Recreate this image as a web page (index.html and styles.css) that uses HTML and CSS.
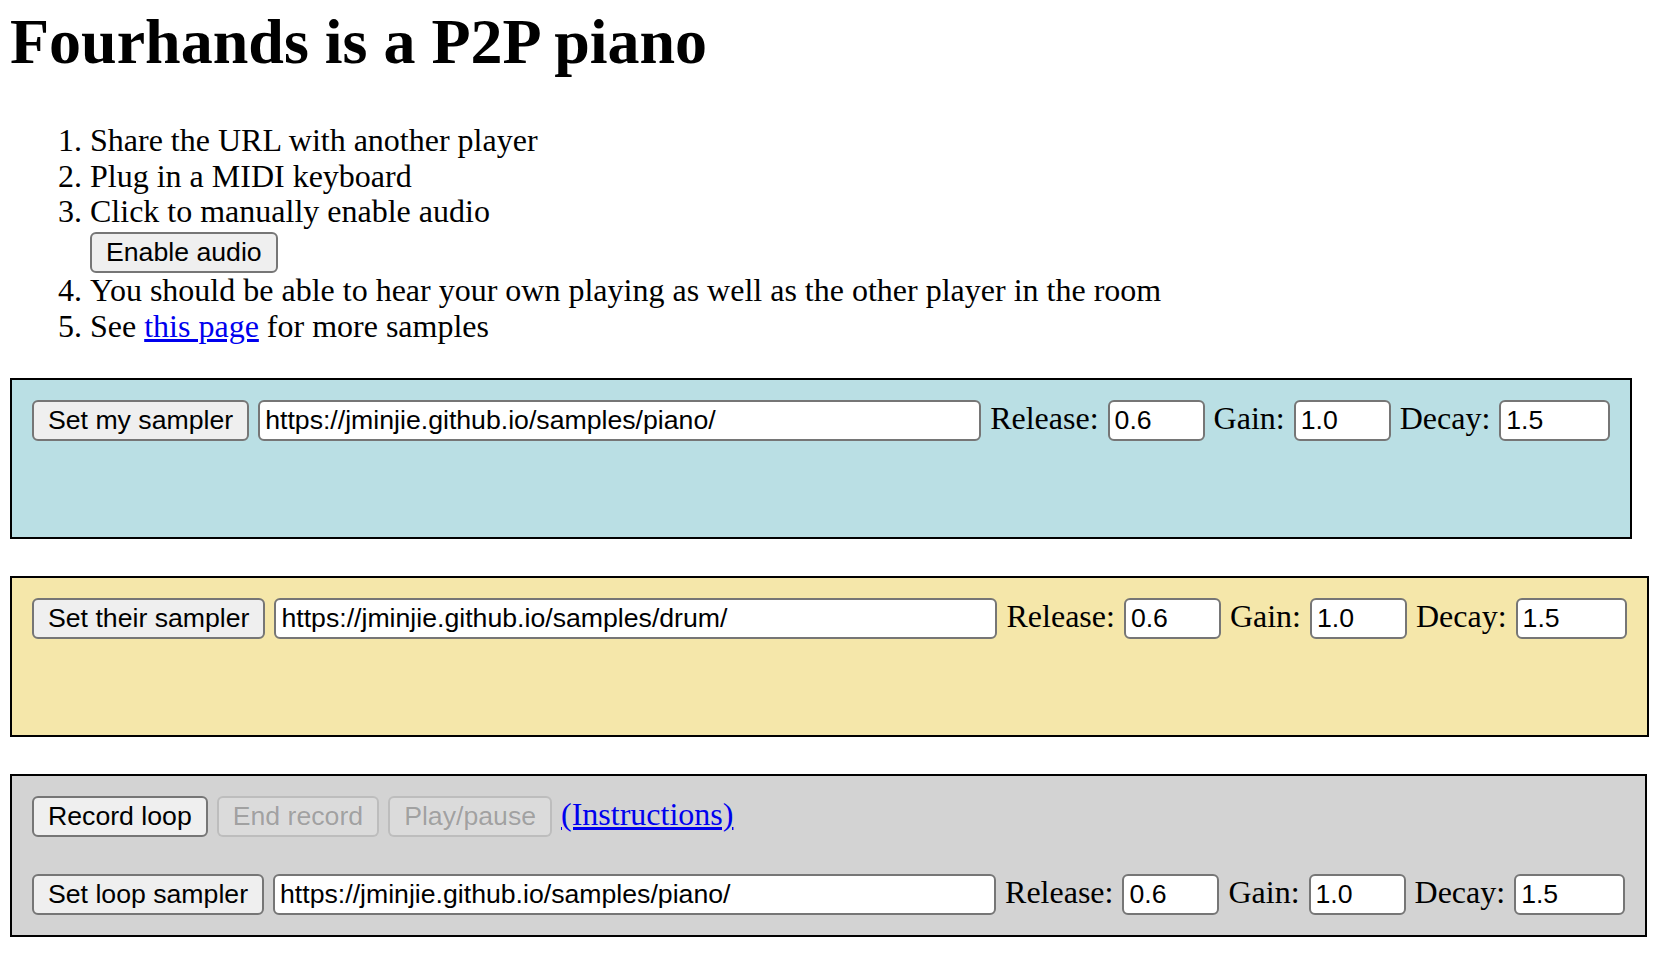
FILE: index.html
```html
<!DOCTYPE html>
<html lang="en">
<head>
<meta charset="utf-8">
<title>Fourhands</title>
<link rel="stylesheet" href="styles.css">
</head>
<body>
<h1 class="title">Fourhands is a P2P piano</h1>
<ol class="steps">
  <li>Share the URL with another player</li>
  <li>Plug in a MIDI keyboard</li>
  <li>Click to manually enable audio<br><button class="btn btn-enable">Enable audio</button></li>
  <li>You should be able to hear your own playing as well as the other player in the room</li>
  <li>See <a class="link" href="#">this page</a> for more samples</li>
</ol>

<div class="panel panel-mine">
  <div class="row">
    <button class="btn">Set my sampler</button>
    <input class="field url" type="text" value="https://jminjie.github.io/samples/piano/">
    <span class="label">Release:</span>
    <input class="field num" type="text" value="0.6">
    <span class="label">Gain:</span>
    <input class="field num" type="text" value="1.0">
    <span class="label">Decay:</span>
    <input class="field num-wide" type="text" value="1.5">
  </div>
  <div class="spacer"></div>
</div>

<div class="panel panel-theirs">
  <div class="row">
    <button class="btn">Set their sampler</button>
    <input class="field url" type="text" value="https://jminjie.github.io/samples/drum/">
    <span class="label">Release:</span>
    <input class="field num" type="text" value="0.6">
    <span class="label">Gain:</span>
    <input class="field num" type="text" value="1.0">
    <span class="label">Decay:</span>
    <input class="field num-wide" type="text" value="1.5">
  </div>
  <div class="spacer"></div>
</div>

<div class="panel panel-loop">
  <div class="row">
    <button class="btn">Record loop</button>
    <button class="btn" disabled>End record</button>
    <button class="btn" disabled>Play/pause</button>
    <a class="link" href="#">(Instructions)</a>
  </div>
  <div class="row">
    <button class="btn">Set loop sampler</button>
    <input class="field url" type="text" value="https://jminjie.github.io/samples/piano/">
    <span class="label">Release:</span>
    <input class="field num" type="text" value="0.6">
    <span class="label">Gain:</span>
    <input class="field num" type="text" value="1.0">
    <span class="label">Decay:</span>
    <input class="field num-wide" type="text" value="1.5">
  </div>
</div>
</body>
</html>
```
FILE: styles.css
```css
html {
  background: #fff;
}

body {
  margin: 0 10px;
  font-family: "Liberation Serif", "Times New Roman", serif;
  font-size: 32px;
  color: #000;
}

.title {
  font-size: 64px;
  font-weight: bold;
  line-height: 72px;
  margin: 6px 0 0;
}

.steps {
  margin: 45px 0 33.5px;
  padding-left: 80px;
  line-height: 35.7px;
}

.link {
  color: #0000ee;
  text-decoration: underline;
}

.btn,
.field {
  font-family: "Liberation Sans", Arial, sans-serif;
  font-size: 26.67px;
  height: 41px;
  box-sizing: border-box;
  border: 2px solid #767676;
  border-radius: 6px;
  color: #000;
  margin: 0;
}

.btn {
  background: #efefef;
  padding: 0 14px;
}

.btn:disabled {
  background: rgba(239, 239, 239, 0.3);
  border-color: rgba(118, 118, 118, 0.3);
  color: rgba(16, 16, 16, 0.3);
}

.btn-enable {
  margin-top: 2px;
}

.field {
  background: #fff;
  padding: 0 4px 0 5px;
}

.url {
  width: 723px;
}

.num {
  width: 97px;
}

.num-wide {
  width: 111px;
}

.panel {
  width: fit-content;
  border: 2px solid #000;
  padding: 20px;
  margin-bottom: 37px;
}

.panel-mine {
  background: #badfe4;
}

.panel-theirs {
  background: #f5e7aa;
}

.panel-loop {
  background: #d3d3d3;
}

.row {
  display: flex;
  align-items: baseline;
  gap: 9px;
  line-height: 35.7px;
}

.row + .row {
  margin-top: 37px;
}

.spacer {
  height: 76px;
}
```
